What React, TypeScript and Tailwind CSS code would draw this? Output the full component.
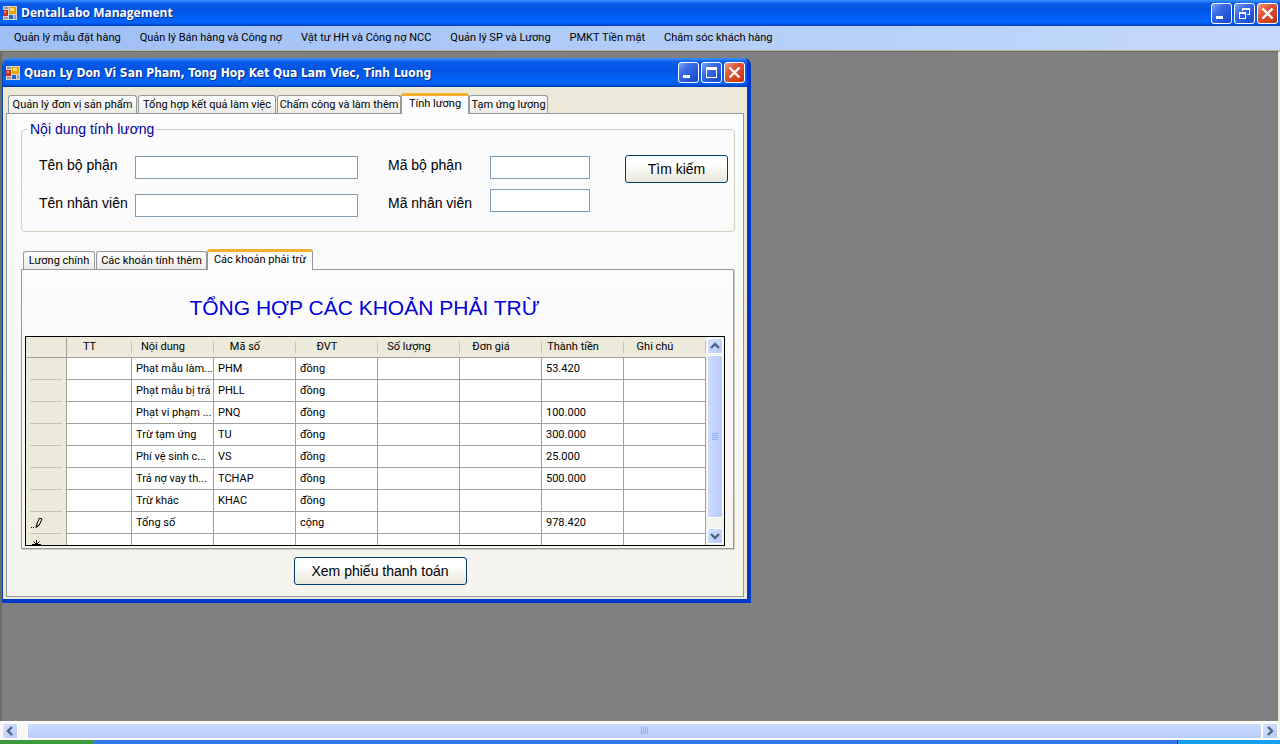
import React from "react";

const menuItems = [
  "Quản lý mẫu đặt hàng",
  "Quản lý Bán hàng và Công nợ",
  "Vật tư HH và Công nợ NCC",
  "Quản lý SP và Lương",
  "PMKT Tiền mặt",
  "Chăm sóc khách hàng",
];

type Tab = { label: string; width: string; active?: boolean };

const mainTabs: Tab[] = [
  { label: "Quản lý đơn vị sản phẩm", width: "w-[129px]" },
  { label: "Tổng hợp kết quả làm việc", width: "w-[138px]" },
  { label: "Chấm công và làm thêm", width: "w-[124px]" },
  { label: "Tính lương", width: "w-[68px]", active: true },
  { label: "Tạm ứng lương", width: "w-[79px]" },
];

const detailTabs: Tab[] = [
  { label: "Lương chính", width: "w-[72px]" },
  { label: "Các khoản tính thêm", width: "w-[111px]" },
  { label: "Các khoản phải trừ", width: "w-[106px]", active: true },
];

const columns = ["TT", "Nội dung", "Mã số", "ĐVT", "Số lượng", "Đơn giá", "Thành tiền", "Ghi chú"];

const rows: string[][] = [
  ["", "Phạt mẫu làm...", "PHM", "đồng", "", "", "53.420", ""],
  ["", "Phạt mẫu bị trả", "PHLL", "đồng", "", "", "", ""],
  ["", "Phạt vi phạm ...", "PNQ", "đồng", "", "", "100.000", ""],
  ["", "Trừ tạm ứng", "TU", "đồng", "", "", "300.000", ""],
  ["", "Phí vệ sinh c...", "VS", "đồng", "", "", "25.000", ""],
  ["", "Trả nợ vay th...", "TCHAP", "đồng", "", "", "500.000", ""],
  ["", "Trừ khác", "KHAC", "đồng", "", "", "", ""],
  ["", "Tổng số", "", "cộng", "", "", "978.420", ""],
  ["", "", "", "", "", "", "", ""],
];

function AppIcon() {
  return (
    <svg width="14" height="14" viewBox="0 0 14 14" className="shrink-0" aria-hidden="true">
      <rect width="14" height="14" fill="#d8d4c8" />
      <rect x="1" y="1" width="4" height="2" fill="#8f98ac" />
      <rect x="0" y="4" width="5" height="6" fill="#c8331c" />
      <rect x="1" y="5" width="2" height="2" fill="#f08a6c" />
      <rect x="6" y="1" width="7" height="7" fill="#e9a400" />
      <rect x="7" y="2" width="4" height="3" fill="#ffe27a" />
      <rect x="6" y="9" width="4" height="4" fill="#2f63c9" />
      <rect x="11" y="9" width="2" height="4" fill="#8a9cc0" />
      <rect x="1" y="11" width="4" height="2" fill="#9a9a98" />
    </svg>
  );
}

function CaptionButton({ kind }: { kind: "minimize" | "maximize" | "restore" | "close" }) {
  const label = { minimize: "Minimize", maximize: "Maximize", restore: "Restore", close: "Close" }[kind];
  const face =
    kind === "close"
      ? "bg-[linear-gradient(135deg,#f0a088_0%,#e0583a_35%,#d0401c_75%,#b83010_100%)]"
      : "bg-[linear-gradient(135deg,#7fa4f4_0%,#3a6be6_35%,#2456d8_70%,#1a48c0_100%)]";
  return (
    <button
      type="button"
      aria-label={label}
      className={`flex size-[21px] items-center justify-center rounded-[3px] border border-white ${face}`}
    >
      <svg width="19" height="19" viewBox="0 0 19 19" fill="none" stroke="#fff" aria-hidden="true">
        {kind === "minimize" && <rect x="4" y="12" width="7" height="3" fill="#fff" stroke="none" />}
        {kind === "maximize" && (
          <path d="M4 4h11v11H4zM5 7v7h9V7z" fill="#fff" fillRule="evenodd" stroke="none" />
        )}
        {kind === "restore" && (
          <path
            d="M7 4h8v7h-3v-1h2V6H8v1H7zM4 8h7v7H4zM5 10v4h5v-4z"
            fill="#fff"
            fillRule="evenodd"
            stroke="none"
          />
        )}
        {kind === "close" && <path d="M4.5 4.5l10 10M14.5 4.5l-10 10" strokeWidth="2.4" />}
      </svg>
    </button>
  );
}

function TabStrip({ tabs, label }: { tabs: Tab[]; label: string }) {
  return (
    <div role="tablist" aria-label={label} className="flex items-end pl-[2px]">
      {tabs.map((tab) => (
        <button
          key={tab.label}
          type="button"
          role="tab"
          aria-selected={!!tab.active}
          className={
            tab.active
              ? `relative -mb-px -ml-px flex h-[21px] items-start justify-center rounded-t-[3px] border border-t-[3px] border-b-0 border-[#919b9c] border-t-[#f5b031] bg-[#fcfcfe] font-['Roboto',sans-serif] text-[11px] leading-[15px] whitespace-nowrap ${tab.width}`
              : `mr-px flex h-[18px] items-center justify-center rounded-t-[3px] border border-b-0 border-[#919b9c] bg-linear-to-b from-white to-[#ecebe6] font-['Roboto',sans-serif] text-[11px] leading-[16px] whitespace-nowrap ${tab.width}`
          }
        >
          {tab.label}
        </button>
      ))}
    </div>
  );
}

function Chevron({ direction }: { direction: "up" | "down" | "left" | "right" }) {
  const d = {
    up: "M1 7l4-4 4 4",
    down: "M1 3l4 4 4-4",
    left: "M7 1L3 5l4 4",
    right: "M3 1l4 4-4 4",
  }[direction];
  return (
    <svg width="10" height="10" viewBox="0 0 10 10" fill="none" stroke="#4d6185" strokeWidth="2.4" aria-hidden="true">
      <path d={d} />
    </svg>
  );
}

function ScrollButton({ direction }: { direction: "up" | "down" | "left" | "right" }) {
  return (
    <button
      type="button"
      aria-label={`Scroll ${direction}`}
      className="flex size-4 shrink-0 items-center justify-center rounded-[2px] border border-white bg-[linear-gradient(135deg,#d6e2ff,#b6caf8)]"
    >
      <Chevron direction={direction} />
    </button>
  );
}

function RowMarker({ index }: { index: number }) {
  if (index === 7) {
    return (
      <svg width="12" height="12" viewBox="0 0 12 12" fill="none" stroke="#000" aria-hidden="true">
        <path d="M5 10.500l.5-3 3-6.500 2.500 1-3 6.500zM5.500 7.500l2.500 1" />
        <path d="M0 10.500h1M2 10.500h1" />
      </svg>
    );
  }
  if (index === 8) {
    return (
      <svg width="12" height="12" viewBox="0 0 12 12" fill="none" stroke="#000" aria-hidden="true">
        <path d="M5.500 1v9M1 5.500h9M2.500 2.500l6 6M8.500 2.500l-6 6" />
      </svg>
    );
  }
  return null;
}

function TextField({ id, width }: { id: string; width: string }) {
  return (
    <input
      id={id}
      type="text"
      className={`h-[23px] border border-[#7f9db9] bg-white px-1 text-[13px] outline-none ${width}`}
    />
  );
}

const pushButton =
  "h-7 rounded-[3px] border border-[#003c74] bg-linear-to-b from-white from-30% to-[#e8e6da] pb-px text-[14px] leading-none";

export default function App() {
  return (
    <div className="flex min-h-screen flex-col bg-[#808080] font-['Liberation_Sans',sans-serif] text-black">
      <header>
        <div className="flex h-[26px] items-center gap-1 bg-[linear-gradient(180deg,#3a94ff_0%,#0a5ae8_14%,#0054e3_40%,#0066ff_85%,#0050d8_94%,#003cb4_100%)] pr-[2px] pl-[3px]">
          <AppIcon />
          <h1 className="flex-1 font-['Open_Sans',sans-serif] text-[12px] font-bold text-white [text-shadow:1px_1px_#0a2a80]">
            DentalLabo Management
          </h1>
          <div className="flex gap-[2px]">
            <CaptionButton kind="minimize" />
            <CaptionButton kind="restore" />
            <CaptionButton kind="close" />
          </div>
        </div>
        <nav className="flex h-[25px] items-center gap-[19px] border-b border-[#b8b4a0] bg-linear-to-r from-[#9ebef5] to-[#c4dafa] pl-[14px]">
          {menuItems.map((item) => (
            <button key={item} type="button" className="font-['Roboto',sans-serif] text-[11px] whitespace-nowrap">
              {item}
            </button>
          ))}
        </nav>
      </header>

      <main className="flex-1 border-t border-r-2 border-l-2 border-[#6e6b62] border-r-[#ece9d8] pt-[6px]">
        <section
          aria-label="Quan Ly Don Vi San Pham"
          className="max-w-[749px] overflow-hidden rounded-t-[7px] border-r-4 border-b-4 border-l border-[#0038c8] border-l-[#0048b0] bg-[#ece9d8]"
        >
          <div className="flex h-[29px] items-center gap-1 bg-[linear-gradient(180deg,#3a94ff_0%,#0a5ae8_14%,#0054e3_40%,#0066ff_85%,#0050d8_94%,#003cb4_100%)] pr-[2px] pl-[3px]">
            <AppIcon />
            <h2 className="flex-1 font-['DejaVu_Sans_Condensed','DejaVu_Sans',sans-serif] text-[12px] font-bold text-white [text-shadow:1px_1px_#0a2a80]">
              Quan Ly Don Vi San Pham, Tong Hop Ket Qua Lam Viec, Tinh Luong
            </h2>
            <div className="flex gap-[2px]">
              <CaptionButton kind="minimize" />
              <CaptionButton kind="maximize" />
              <CaptionButton kind="close" />
            </div>
          </div>

          <div className="px-[3px] pt-[6px] pb-[2px]">
            <TabStrip tabs={mainTabs} label="Main sections" />
            <div className="border border-[#919b9c] bg-linear-to-b from-[#fcfcfe] to-[#f4f3ee] pt-[7px] pr-2 pb-[11px] pl-[14px]">
              <fieldset className="flex h-[111px] items-start rounded-[4px] border border-[#d0d0bf] pr-[6px] pl-[17px]">
                <legend className="-ml-[11px] px-[2px] text-[14px] leading-[17px] text-[#000099]">Nội dung tính lương</legend>
                <div className="flex w-[96px] flex-col gap-[15px] pt-4 text-[14px] leading-[23px] whitespace-nowrap">
                  <label htmlFor="dept-name">Tên bộ phận</label>
                  <label htmlFor="staff-name">Tên nhân viên</label>
                </div>
                <div className="flex flex-col gap-[15px] pt-[18px]">
                  <TextField id="dept-name" width="w-[223px]" />
                  <TextField id="staff-name" width="w-[223px]" />
                </div>
                <div className="ml-[30px] flex w-[102px] flex-col gap-[15px] pt-4 text-[14px] leading-[23px] whitespace-nowrap">
                  <label htmlFor="dept-code">Mã bộ phận</label>
                  <label htmlFor="staff-code">Mã nhân viên</label>
                </div>
                <div className="flex flex-col gap-[10px] pt-[18px]">
                  <TextField id="dept-code" width="w-[100px]" />
                  <TextField id="staff-code" width="w-[100px]" />
                </div>
                <div className="ml-auto pt-[17px]">
                  <button type="button" className={`w-[103px] ${pushButton}`}>
                    Tìm kiếm
                  </button>
                </div>
              </fieldset>

              <div className="pt-[17px]">
                <TabStrip tabs={detailTabs} label="Salary details" />
                <div className="mr-px border border-[#919b9c] bg-linear-to-b from-[#fcfcfe] to-[#f6f5f1] px-[3px] pb-[2px] shadow-[1px_1px_#d0cec0]">
                  <h3 className="flex h-[66px] items-center justify-center pt-[10px] pr-[26px] text-[21px] text-[#0000d8]">
                    TỔNG HỢP CÁC KHOẢN PHẢI TRỪ
                  </h3>
                  <div className="mr-[5px] flex h-[210px] overflow-hidden border border-black bg-white">
                    <div className="min-w-0 flex-1 overflow-hidden">
                      <table className="w-full table-fixed border-separate border-spacing-0 font-['Roboto',sans-serif] text-[11px] leading-[14px]">
                        <colgroup>
                          <col className="w-[41px]" />
                          <col className="w-[65px]" />
                          <col />
                          <col />
                          <col />
                          <col />
                          <col />
                          <col />
                          <col />
                        </colgroup>
                        <thead>
                          <tr className="h-[21px] bg-[#ebeadb]">
                            <th aria-label="Row" className="border-r border-b border-[#a5a295]" />
                            {columns.map((name) => (
                              <th
                                key={name}
                                className="border-b border-[#a5a295] bg-[linear-gradient(#c8c4b0,#c8c4b0)] bg-[length:1px_12px] bg-right bg-no-repeat p-0 pr-5 text-center font-normal whitespace-nowrap"
                              >
                                {name}
                              </th>
                            ))}
                          </tr>
                        </thead>
                        <tbody>
                          {rows.map((row, r) => (
                            <tr key={r} className="h-[22px]">
                              <th className="border-r border-[#a5a295] bg-[#ebeadb] bg-[linear-gradient(#c8c4b0,#c8c4b0)] bg-[length:32px_1px] bg-bottom bg-no-repeat p-0 pl-[5px]">
                                <RowMarker index={r} />
                              </th>
                              {row.map((cell, c) => (
                                <td key={c} className="border-r border-b border-[#a5a295] p-0 pl-1 whitespace-nowrap">
                                  {cell}
                                </td>
                              ))}
                            </tr>
                          ))}
                        </tbody>
                      </table>
                    </div>
                    <div className="flex w-[18px] flex-col items-center bg-[#f4f3ee] py-px">
                      <ScrollButton direction="up" />
                      <div className="mt-px flex h-[163px] w-4 flex-col items-center justify-center gap-px rounded-[2px] border border-white bg-linear-to-r from-[#cddbff] to-[#b8ccf9]">
                        <span className="h-px w-[6px] bg-[#8cb0f8]" />
                        <span className="h-px w-[6px] bg-[#8cb0f8]" />
                        <span className="h-px w-[6px] bg-[#8cb0f8]" />
                        <span className="h-px w-[6px] bg-[#8cb0f8]" />
                      </div>
                      <div className="flex-1" />
                      <ScrollButton direction="down" />
                    </div>
                  </div>
                </div>
              </div>

              <div className="flex justify-center pt-2 pl-1">
                <button type="button" className={`w-[173px] ${pushButton}`}>
                  Xem phiếu thanh toán
                </button>
              </div>
            </div>
          </div>
        </section>
      </main>

      <footer>
        <div className="flex h-[18px] items-center border-t border-white bg-[#f8f7f2] px-[2px]">
          <ScrollButton direction="left" />
          <div className="ml-[9px] flex h-4 flex-1 items-center justify-center gap-px rounded-[2px] border border-white bg-linear-to-b from-[#cddbff] to-[#b8ccf9]">
            <span className="h-[7px] w-px bg-[#8cb0f8]" />
            <span className="h-[7px] w-px bg-[#8cb0f8]" />
            <span className="h-[7px] w-px bg-[#8cb0f8]" />
            <span className="h-[7px] w-px bg-[#8cb0f8]" />
          </div>
          <ScrollButton direction="right" />
        </div>
        <div className="flex h-[5px] border-t border-white">
          <div className="w-[94px] bg-[#3c9a3c]" />
          <div className="flex-1 bg-[#2f7ae8]" />
          <div className="w-[103px] border-l border-[#0a3a9a] bg-[#18a0f0]" />
        </div>
      </footer>
    </div>
  );
}
